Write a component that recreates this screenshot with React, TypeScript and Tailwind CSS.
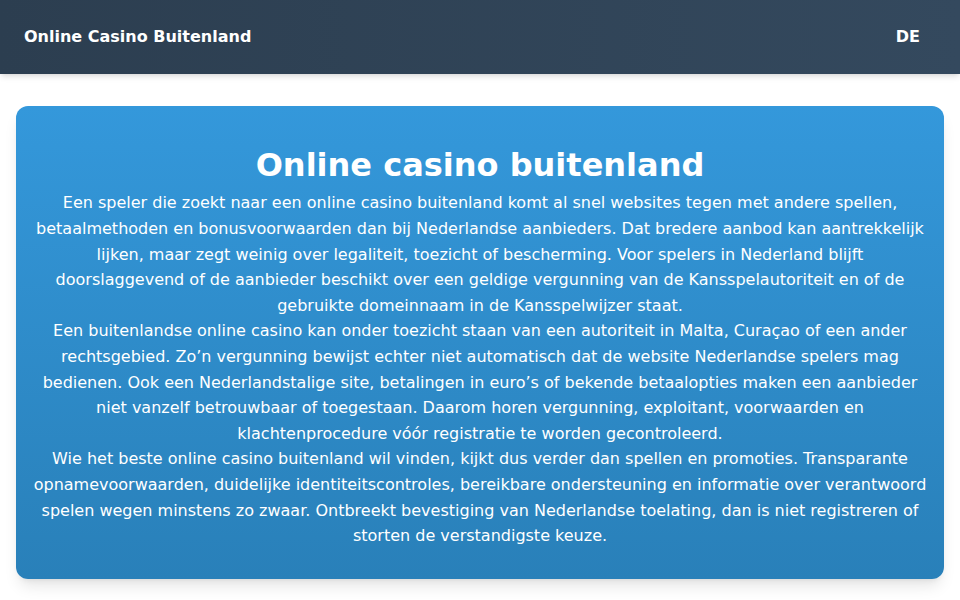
import React from "react";

const paragraphs = [
  "Een speler die zoekt naar een online casino buitenland komt al snel websites tegen met andere spellen, betaalmethoden en bonusvoorwaarden dan bij Nederlandse aanbieders. Dat bredere aanbod kan aantrekkelijk lijken, maar zegt weinig over legaliteit, toezicht of bescherming. Voor spelers in Nederland blijft doorslaggevend of de aanbieder beschikt over een geldige vergunning van de Kansspelautoriteit en of de gebruikte domeinnaam in de Kansspelwijzer staat.",
  "Een buitenlandse online casino kan onder toezicht staan van een autoriteit in Malta, Curaçao of een ander rechtsgebied. Zo’n vergunning bewijst echter niet automatisch dat de website Nederlandse spelers mag bedienen. Ook een Nederlandstalige site, betalingen in euro’s of bekende betaalopties maken een aanbieder niet vanzelf betrouwbaar of toegestaan. Daarom horen vergunning, exploitant, voorwaarden en klachtenprocedure vóór registratie te worden gecontroleerd.",
  "Wie het beste online casino buitenland wil vinden, kijkt dus verder dan spellen en promoties. Transparante opnamevoorwaarden, duidelijke identiteitscontroles, bereikbare ondersteuning en informatie over verantwoord spelen wegen minstens zo zwaar. Ontbreekt bevestiging van Nederlandse toelating, dan is niet registreren of storten de verstandigste keuze.",
];

export default function App() {
  return (
    <div className="min-h-screen bg-white font-['DejaVu_Sans',sans-serif] text-white">
      {/* Top bar */}
      <header className="flex h-[74px] items-center justify-between bg-gradient-to-r from-[#2c3e50] to-[#34495e] pl-6 pr-10 shadow-md">
        <span className="text-base font-bold">Online Casino Buitenland</span>
        <span className="text-base font-bold">DE</span>
      </header>

      <main className="px-4 pt-8 pb-6">
        <section className="rounded-xl bg-gradient-to-b from-[#3498db] to-[#2980b9] px-4 pt-10 pb-[30px] text-center shadow-lg">
          <h1 className="mb-1.5 text-[32px] font-bold leading-[1.2]">Online casino buitenland</h1>
          {paragraphs.map((p, i) => (
            <p key={i} className="text-base leading-[1.6]">
              {p}
            </p>
          ))}
        </section>
      </main>
    </div>
  );
}
